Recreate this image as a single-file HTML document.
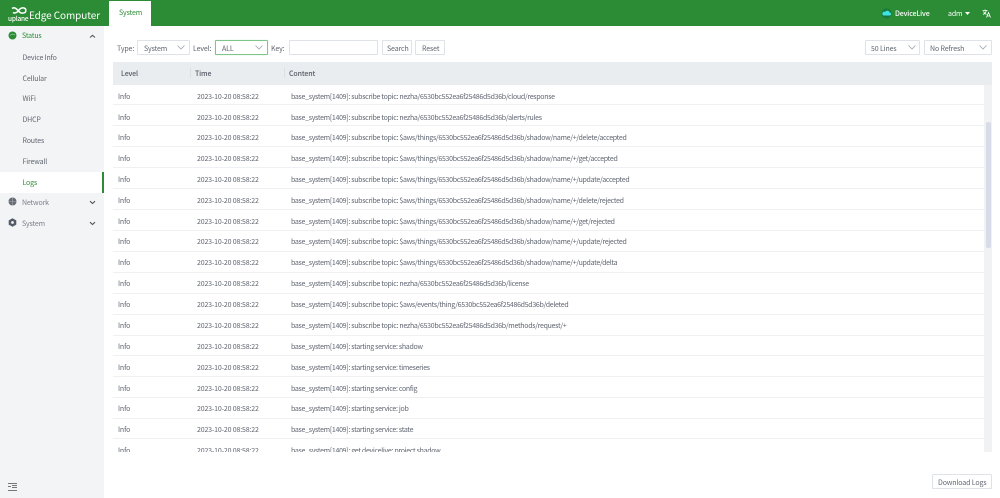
<!DOCTYPE html>
<html><head><meta charset="utf-8"><style>
*{box-sizing:border-box;margin:0;padding:0}
html,body{width:1000px;height:498px;overflow:hidden;background:#fff}
body{font-family:"Noto Sans CJK SC","Liberation Sans",sans-serif;font-size:7px;color:#5f6570;position:relative}
.a{position:absolute;white-space:nowrap;line-height:12px;letter-spacing:-.12px}
.a[style*="left:291px"]{letter-spacing:-.3px}
.a[style*="left:197px"]{letter-spacing:-.16px}
.box{position:absolute;border:1px solid #dfe2e7;background:#fff;height:15px;border-radius:1px}
.row{position:absolute;left:113px;width:871px;height:1px;background:#eff0f2}
.nav{position:absolute;left:22.5px;line-height:12px;font-size:7px;color:#5f6570;letter-spacing:-.15px}
svg{position:absolute}
</style></head><body>
<div style="position:absolute;left:0;top:0;width:1000px;height:26px;background:#2b8c35"></div>
<div style="position:absolute;left:109px;top:1px;width:42px;height:25px;background:#fff"></div>
<div class="a" style="left:119px;top:7px;color:#2b8c35;font-size:7px">System</div>
<svg style="left:9px;top:6px" width="20" height="14" viewBox="0 0 20 14"><path d="M3 2.500C5 1 7 2 9 4.500C11 7 13 8 16 6.500C17.500 5 17 2.500 15 2C13 1.500 11 2.500 9.500 4.500C8 7 5.500 7.500 4 6.500" fill="none" stroke="#fff" stroke-width="1.500"/></svg>
<div class="a" style="left:8px;top:14px;color:#fff;font-size:6.500px;letter-spacing:-.2px;line-height:8px;font-weight:500">uplane</div>
<div class="a" style="left:29px;top:7px;color:#fff;font-size:10px;line-height:16px;letter-spacing:-.1px">Edge Computer</div>
<svg style="left:881px;top:8px" width="11" height="11"><circle cx="5.500" cy="5.500" r="5" fill="#17793b"/><path d="M2.500 7.500h6a1.500 1.500 0 0 0 0-3 2.300 2.300 0 0 0-4.300-.6 1.800 1.800 0 0 0-1.700 3.600z" fill="#3fe3e3"/></svg>
<div class="a" style="left:895px;top:8px;color:#fff;font-size:7px;font-weight:500">DeviceLive</div>
<div class="a" style="left:948px;top:8px;color:#fff;font-size:7px">adm</div>
<svg style="left:965px;top:12px" width="5" height="3"><path d="M0 0h5L2.500 3z" fill="#fff"/></svg>
<svg style="left:982px;top:9px" width="9" height="9" viewBox="0 0 9 9"><path d="M.5 1.500h5M3 .5v1M1 5.500c2 -1 3-2.500 3.300-4M1.500 2.500c.5 1.300 1.500 2.300 3 3M4.500 8.500l2-5 2 5M5.300 7h2.500" fill="none" stroke="#fff" stroke-width=".8"/></svg>

<div style="position:absolute;left:0;top:26px;width:104px;height:472px;background:#f3f4f6"></div>
<div style="position:absolute;left:0;top:172px;width:104px;height:21px;background:#fff"></div>
<div style="position:absolute;left:102px;top:172px;width:2px;height:21px;background:#2b8c35"></div>
<svg style="left:8px;top:31px" width="9" height="9"><circle cx="4.500" cy="4.500" r="4" fill="#2b8c35"/><path d="M2 4.500L4 3l3 1" stroke="#8ccf92" stroke-width=".7" fill="none"/></svg>
<div class="nav" style="left:22px;top:30px;color:#2b8c35">Status</div>
<svg style="left:89px;top:34px" width="7" height="5"><path d="M1 3.500L3.500 1.300 6 3.500" fill="none" stroke="#555" stroke-width="1.100"/></svg>
<div class="nav" style="top:52px">Device Info</div>
<div class="nav" style="top:73px">Cellular</div>
<div class="nav" style="top:93px">WiFi</div>
<div class="nav" style="top:114px">DHCP</div>
<div class="nav" style="top:135px">Routes</div>
<div class="nav" style="top:156px">Firewall</div>
<div class="nav" style="top:177px;color:#2b8c35">Logs</div>
<svg style="left:8px;top:197px" width="9" height="9"><circle cx="4.500" cy="4.500" r="4" fill="#666c76"/><path d="M.5 4.500h8M4.500 .5v8" stroke="#aaa" stroke-width=".6"/></svg>
<div class="nav" style="left:22px;top:197px;color:#7a808a">Network</div>
<svg style="left:89px;top:200px" width="7" height="5"><path d="M1 1.200L3.500 3.500 6 1.200" fill="none" stroke="#555" stroke-width="1.100"/></svg>
<svg style="left:8px;top:218px" width="9" height="9"><path d="M4.500 .3L8.300 2.400v4.200L4.500 8.700.7 6.600V2.400z" fill="#555b66"/><circle cx="4.500" cy="4.500" r="1.400" fill="#f3f4f6"/></svg>
<div class="nav" style="left:22px;top:218px;color:#7a808a">System</div>
<svg style="left:89px;top:221px" width="7" height="5"><path d="M1 1.200L3.500 3.500 6 1.200" fill="none" stroke="#555" stroke-width="1.100"/></svg>
<svg style="left:8px;top:483px" width="9" height="8"><path d="M0 .5h9M4 2.500h5M4 4.500h5M0 7.500h9M0 3.500h3" stroke="#777" stroke-width="1" fill="none"/></svg>

<div class="a" style="left:117px;top:43px">Type:</div>
<div class="box" style="left:137px;top:40px;width:53px"></div>
<div class="a" style="left:144px;top:43px">System</div>
<svg style="left:177px;top:45px" width="8" height="5"><path d="M.5 .5L4 4 7.500 .5" fill="none" stroke="#a0a5ad" stroke-width=".8"/></svg>
<div class="a" style="left:193px;top:43px">Level:</div>
<div class="box" style="left:215px;top:40px;width:53px;border-color:#7fc488;box-shadow:0 0 1px #b9dfbc"></div>
<div class="a" style="left:222px;top:43px">ALL</div>
<svg style="left:255px;top:45px" width="8" height="5"><path d="M.5 .5L4 4 7.500 .5" fill="none" stroke="#a0a5ad" stroke-width=".8"/></svg>
<div class="a" style="left:271px;top:43px">Key:</div>
<div class="box" style="left:289px;top:40px;width:89px"></div>
<div class="box" style="left:382px;top:40px;width:30px"></div>
<div class="a" style="left:387px;top:43px">Search</div>
<div class="box" style="left:415px;top:40px;width:30px"></div>
<div class="a" style="left:422px;top:43px">Reset</div>
<div class="box" style="left:865px;top:40px;width:55px"></div>
<div class="a" style="left:871px;top:43px">50 Lines</div>
<svg style="left:908px;top:45px" width="8" height="5"><path d="M.5 .5L4 4 7.500 .5" fill="none" stroke="#a0a5ad" stroke-width=".8"/></svg>
<div class="box" style="left:924px;top:40px;width:68px"></div>
<div class="a" style="left:930px;top:43px">No Refresh</div>
<svg style="left:979px;top:45px" width="8" height="5"><path d="M.5 .5L4 4 7.500 .5" fill="none" stroke="#a0a5ad" stroke-width=".8"/></svg>

<div style="position:absolute;left:113px;top:62px;width:879px;height:23px;background:#eaedf0"></div>
<div style="position:absolute;left:190px;top:68px;width:1px;height:10px;background:#dcdfe3"></div>
<div style="position:absolute;left:284px;top:68px;width:1px;height:10px;background:#dcdfe3"></div>
<div class="a" style="left:121px;top:68px;font-weight:500;color:#555b66">Level</div>
<div class="a" style="left:195px;top:68px;font-weight:500;color:#555b66">Time</div>
<div class="a" style="left:289px;top:68px;font-weight:500;color:#555b66">Content</div>
<div style="position:absolute;left:984px;top:85px;width:8px;height:367px;background:#f1f2f4"></div>
<div style="position:absolute;left:985.500px;top:122px;width:5px;height:126px;background:#d8dbe8;border-radius:2px"></div>

<div style="position:absolute;left:0;top:85px;width:1000px;height:367px;overflow:hidden">
<div style="position:absolute;left:0;top:-85px;width:1000px;height:498px">
<div class="row" style="top:104px"></div><div class="a" style="left:118px;top:91px">Info</div><div class="a" style="left:197px;top:91px">2023-10-20 08:58:22</div><div class="a" style="left:291px;top:91px">base_system[1409]: subscribe topic: nezha/6530bc552ea6f25486d5d36b/cloud/response</div>
<div class="row" style="top:125px"></div><div class="a" style="left:118px;top:112px">Info</div><div class="a" style="left:197px;top:112px">2023-10-20 08:58:22</div><div class="a" style="left:291px;top:112px">base_system[1409]: subscribe topic: nezha/6530bc552ea6f25486d5d36b/alerts/rules</div>
<div class="row" style="top:146px"></div><div class="a" style="left:118px;top:132px">Info</div><div class="a" style="left:197px;top:132px">2023-10-20 08:58:22</div><div class="a" style="left:291px;top:132px">base_system[1409]: subscribe topic: $aws/things/6530bc552ea6f25486d5d36b/shadow/name/+/delete/accepted</div>
<div class="row" style="top:167px"></div><div class="a" style="left:118px;top:153px">Info</div><div class="a" style="left:197px;top:153px">2023-10-20 08:58:22</div><div class="a" style="left:291px;top:153px">base_system[1409]: subscribe topic: $aws/things/6530bc552ea6f25486d5d36b/shadow/name/+/get/accepted</div>
<div class="row" style="top:188px"></div><div class="a" style="left:118px;top:174px">Info</div><div class="a" style="left:197px;top:174px">2023-10-20 08:58:22</div><div class="a" style="left:291px;top:174px">base_system[1409]: subscribe topic: $aws/things/6530bc552ea6f25486d5d36b/shadow/name/+/update/accepted</div>
<div class="row" style="top:209px"></div><div class="a" style="left:118px;top:195px">Info</div><div class="a" style="left:197px;top:195px">2023-10-20 08:58:22</div><div class="a" style="left:291px;top:195px">base_system[1409]: subscribe topic: $aws/things/6530bc552ea6f25486d5d36b/shadow/name/+/delete/rejected</div>
<div class="row" style="top:230px"></div><div class="a" style="left:118px;top:216px">Info</div><div class="a" style="left:197px;top:216px">2023-10-20 08:58:22</div><div class="a" style="left:291px;top:216px">base_system[1409]: subscribe topic: $aws/things/6530bc552ea6f25486d5d36b/shadow/name/+/get/rejected</div>
<div class="row" style="top:251px"></div><div class="a" style="left:118px;top:236px">Info</div><div class="a" style="left:197px;top:236px">2023-10-20 08:58:22</div><div class="a" style="left:291px;top:236px">base_system[1409]: subscribe topic: $aws/things/6530bc552ea6f25486d5d36b/shadow/name/+/update/rejected</div>
<div class="row" style="top:272px"></div><div class="a" style="left:118px;top:257px">Info</div><div class="a" style="left:197px;top:257px">2023-10-20 08:58:22</div><div class="a" style="left:291px;top:257px">base_system[1409]: subscribe topic: $aws/things/6530bc552ea6f25486d5d36b/shadow/name/+/update/delta</div>
<div class="row" style="top:293px"></div><div class="a" style="left:118px;top:278px">Info</div><div class="a" style="left:197px;top:278px">2023-10-20 08:58:22</div><div class="a" style="left:291px;top:278px">base_system[1409]: subscribe topic: nezha/6530bc552ea6f25486d5d36b/license</div>
<div class="row" style="top:314px"></div><div class="a" style="left:118px;top:299px">Info</div><div class="a" style="left:197px;top:299px">2023-10-20 08:58:22</div><div class="a" style="left:291px;top:299px">base_system[1409]: subscribe topic: $aws/events/thing/6530bc552ea6f25486d5d36b/deleted</div>
<div class="row" style="top:335px"></div><div class="a" style="left:118px;top:320px">Info</div><div class="a" style="left:197px;top:320px">2023-10-20 08:58:22</div><div class="a" style="left:291px;top:320px">base_system[1409]: subscribe topic: nezha/6530bc552ea6f25486d5d36b/methods/request/+</div>
<div class="row" style="top:355px"></div><div class="a" style="left:118px;top:341px">Info</div><div class="a" style="left:197px;top:341px">2023-10-20 08:58:22</div><div class="a" style="left:291px;top:341px">base_system[1409]: starting service: shadow</div>
<div class="row" style="top:376px"></div><div class="a" style="left:118px;top:362px">Info</div><div class="a" style="left:197px;top:362px">2023-10-20 08:58:22</div><div class="a" style="left:291px;top:362px">base_system[1409]: starting service: timeseries</div>
<div class="row" style="top:397px"></div><div class="a" style="left:118px;top:383px">Info</div><div class="a" style="left:197px;top:383px">2023-10-20 08:58:22</div><div class="a" style="left:291px;top:383px">base_system[1409]: starting service: config</div>
<div class="row" style="top:418px"></div><div class="a" style="left:118px;top:403px">Info</div><div class="a" style="left:197px;top:403px">2023-10-20 08:58:22</div><div class="a" style="left:291px;top:403px">base_system[1409]: starting service: job</div>
<div class="row" style="top:438px"></div><div class="a" style="left:118px;top:424px">Info</div><div class="a" style="left:197px;top:424px">2023-10-20 08:58:22</div><div class="a" style="left:291px;top:424px">base_system[1409]: starting service: state</div>
<div class="a" style="left:118px;top:445px">Info</div><div class="a" style="left:197px;top:445px">2023-10-20 08:58:22</div><div class="a" style="left:291px;top:445px">base_system[1409]: get devicelive: project shadow</div>
</div></div>

<div class="box" style="left:932px;top:474px;width:60px;height:15px"></div>
<div class="a" style="left:938px;top:477px">Download Logs</div>
</body></html>
